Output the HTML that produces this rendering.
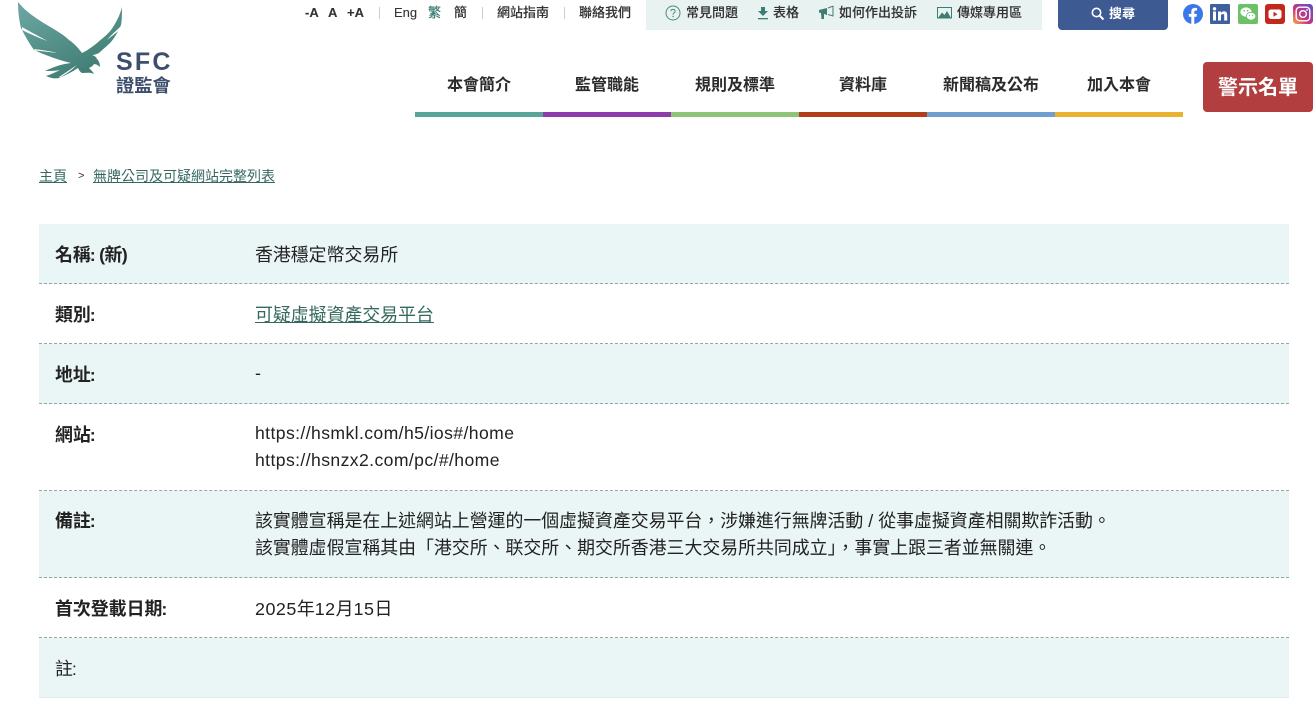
<!DOCTYPE html>
<html lang="zh-Hant"><head><meta charset="utf-8"><title>無牌公司及可疑網站完整列表</title>
<style>
html,body{margin:0;padding:0;background:#fff;width:1315px;height:713px;overflow:hidden}
body{position:relative;font-family:"Liberation Sans","Noto Sans CJK TC",sans-serif;color:#222}
.a{position:absolute;white-space:nowrap}
.t{font-size:13px;line-height:16px;top:5px;color:#333;font-weight:500;-webkit-text-stroke:.1px #333}
.sep{position:absolute;top:7px;width:1px;height:12px;background:#ccc}
.nav{position:absolute;top:74px;width:128px;text-align:center;font-size:16px;line-height:24px;font-weight:700;color:#2b2b2b}
.bar{position:absolute;top:112px;height:5px;width:128px}
.row{position:absolute;left:39px;width:1250px;box-sizing:border-box;border-bottom:1px dashed #8fa8a5}
.row.c{background:#eaf6f6}
.l{position:absolute;left:16px;top:18px;font-size:17.9px;line-height:27px;font-weight:700;color:#222;white-space:nowrap}
.v{position:absolute;left:216px;top:18px;font-size:17.9px;line-height:27px;color:#222;white-space:nowrap}
a{color:#35695f;text-decoration:underline}
.u{font-size:17.6px;letter-spacing:.4px}
.k{margin-left:-1px;font-weight:inherit}
.p{font-family:"Noto Sans CJK SC",sans-serif;line-height:1}
</style></head><body>
<svg class="a" style="left:0;top:0" width="130" height="85" viewBox="0 0 130 85">
<defs><linearGradient id="g" x1="0" y1="0" x2="0.6" y2="1"><stop offset="0" stop-color="#6fa8a3"/><stop offset="1" stop-color="#3f7d74"/></linearGradient></defs>
<path fill="url(#g)" d="M18 2C26 12 37 19 47 25C57 31 64 35 69 40C75 44 79 49 82 53C88 50 92 47 97 43C103 38 108 34 111 30C116 23 120 15 122 7C122 14 122 20 121 25C118 32 115 37 111 42C106 47 102 50 99 53C97 54 94 55 92 55C95 56 96 57 97 59C99 61 100 64 100 67C98 65 96 64 94 64C93 66 91 67 89 68C91 70 93 72 94 74C90 72 86 73 82 73C80 72 79 70 78 68C72 72 66 75 59 78C55 79 50 78 46 76C52 74 56 72 60 70C55 71 50 71 45 71C53 67 62 64 71 63C58 60 45 55 34 50C29 43 25 36 21 28C19 20 18 11 18 2Z"/>
<path fill="#fff" d="M22 27C31 32 40 37 47.5 41C39 38 30 34 22 30Z M34 49C41 50 50 51 57 53C49 52 41 51 35 50.5Z M59 77C65 73 71 69 77 65C72 70 66 74 60 77.5Z M120 27C116 31 111 35 107 40C112 36 116 33 119.5 30Z"/>
</svg>
<div class="a" style="left:116px;top:49px;font-size:25px;line-height:27px;font-weight:700;letter-spacing:2.2px;color:#3d4f6d">SFC</div>
<div class="a" style="left:116px;top:76px;font-size:18.3px;line-height:20px;font-weight:700;color:#3d4f6d">證監會</div>

<span class="a t" style="left:305px;font-weight:700">-A</span><span class="a t" style="left:328px;font-weight:700">A</span><span class="a t" style="left:347px;font-weight:700">+A</span>
<i class="sep" style="left:379px"></i>
<span class="a t" style="left:394px">Eng</span><span class="a t" style="left:428px;color:#3e7d74;-webkit-text-stroke:.1px #3e7d74">繁</span><span class="a t" style="left:454px">簡</span>
<i class="sep" style="left:482px"></i>
<span class="a t" style="left:497px">網站指南</span>
<i class="sep" style="left:564px"></i>
<span class="a t" style="left:579px">聯絡我們</span>

<div class="a" style="left:646px;top:0;width:396px;height:30px;background:#e8f2f0"></div>
<svg class="a" style="left:665px;top:5px" width="16" height="16" viewBox="0 0 16 16"><circle cx="8" cy="8" r="7" fill="none" stroke="#4a8a80" stroke-width="1"/><path d="M5.9 6.2C6 3.8 10.1 3.8 10.1 6.2C10.1 7.8 8 7.8 8 9.6" fill="none" stroke="#4a8a80" stroke-width="1"/><circle cx="8" cy="11.5" r=".7" fill="#4a8a80"/></svg>
<span class="a t" style="left:686px">常見問題</span>
<svg class="a" style="left:757px;top:6px" width="12" height="14" viewBox="0 0 12 14"><path d="M4 1H8V5H11L6 10L1 5H4Z" fill="#3e7d74"/><rect x="1" y="12" width="10" height="1.3" fill="#3e7d74"/></svg>
<span class="a t" style="left:773px">表格</span>
<svg class="a" style="left:818px;top:5px" width="17" height="15" viewBox="0 0 17 15"><path d="M1 5L9 3V10L6 9L6 14H3.5L3 8L1 7.5Z" fill="#3e7d74"/><path d="M10 3L15 1.2V11L10 9.5" fill="none" stroke="#3e7d74" stroke-width="1"/></svg>
<span class="a t" style="left:839px">如何作出投訴</span>
<svg class="a" style="left:937px;top:6px" width="15" height="13" viewBox="0 0 15 13"><rect x=".5" y="1.5" width="14" height="10.5" fill="none" stroke="#3e7d74"/><path d="M1 12L5 6.5L7.5 9L10 5L14 12Z" fill="#3e7d74"/></svg>
<span class="a t" style="left:957px">傳媒專用區</span>

<div class="a" style="left:1058px;top:0;width:110px;height:30px;background:#3e5a92;border-radius:0 0 4px 4px"></div>
<svg class="a" style="left:1091px;top:7px" width="14" height="14" viewBox="0 0 14 14"><circle cx="5.5" cy="5.5" r="4.2" fill="none" stroke="#fff" stroke-width="1.6"/><path d="M8.7 8.7L12.5 12.5" stroke="#fff" stroke-width="2"/></svg>
<span class="a t" style="left:1109px;top:6px;color:#fff;font-weight:700;-webkit-text-stroke:0">搜尋</span>

<svg class="a" style="left:1183px;top:4px" width="20" height="20" viewBox="0 0 20 20"><circle cx="10" cy="10" r="10" fill="#3b78e7"/><path d="M8.3 20V12.8H5.8V9.9H8.3V7.7C8.3 5.2 9.8 3.9 12 3.9C13 3.9 14 4.1 14 4.1V6.5H12.8C11.6 6.5 11.3 7.2 11.3 8V9.9H13.9L13.5 12.8H11.3V20Z" fill="#fff"/></svg>
<svg class="a" style="left:1210px;top:4px" width="20" height="20" viewBox="0 0 20 20"><rect width="20" height="20" rx="1" fill="#3f5f9f"/><rect x="3" y="7.5" width="3" height="9" fill="#fff"/><circle cx="4.5" cy="4.8" r="1.7" fill="#fff"/><path d="M8 7.5H11V9C11.6 8 12.6 7.3 14 7.3C16.4 7.3 17.2 8.8 17.2 11.2V16.5H14.2V11.8C14.2 10.6 13.8 10 12.8 10C11.7 10 11 10.8 11 12V16.5H8Z" fill="#fff"/></svg>
<svg class="a" style="left:1238px;top:4px" width="20" height="20" viewBox="0 0 20 20"><rect width="20" height="20" rx="2" fill="#6cc065"/><ellipse cx="8" cy="8" rx="5.6" ry="4.6" fill="#fff"/><ellipse cx="13" cy="12.2" rx="4.8" ry="3.9" fill="#fff" stroke="#6cc065" stroke-width=".8"/><circle cx="6.2" cy="6.8" r=".8" fill="#6cc065"/><circle cx="9.6" cy="6.8" r=".8" fill="#6cc065"/><circle cx="11.5" cy="11.5" r=".6" fill="#6cc065"/><circle cx="14.5" cy="11.5" r=".6" fill="#6cc065"/></svg>
<svg class="a" style="left:1265px;top:4px" width="20" height="20" viewBox="0 0 20 20"><rect width="20" height="20" rx="3" fill="#c4281c"/><rect x="3.5" y="5.5" width="13" height="9.5" rx="2.5" fill="#fff"/><path d="M8.5 7.7L12.5 10.2L8.5 12.7Z" fill="#c4281c"/></svg>
<svg class="a" style="left:1293px;top:4px" width="20" height="20" viewBox="0 0 20 20"><defs><linearGradient id="ig" x1="0" y1="1" x2="1" y2="0"><stop offset="0" stop-color="#f5b13d"/><stop offset=".4" stop-color="#c9357f"/><stop offset="1" stop-color="#5b50c8"/></linearGradient></defs><rect width="20" height="20" rx="3.5" fill="url(#ig)"/><rect x="3.2" y="3.2" width="13.6" height="13.6" rx="3.4" fill="none" stroke="#fff" stroke-width="1.4"/><circle cx="10" cy="10" r="3.3" fill="none" stroke="#fff" stroke-width="1.4"/><circle cx="14" cy="6" r=".9" fill="#fff"/></svg>

<div class="nav" style="left:415px">本會簡介</div><div class="nav" style="left:543px">監管職能</div><div class="nav" style="left:671px">規則及標準</div><div class="nav" style="left:799px">資料庫</div><div class="nav" style="left:927px">新聞稿及公布</div><div class="nav" style="left:1055px">加入本會</div>
<div class="bar" style="left:415px;background:#5aa59a"></div><div class="bar" style="left:543px;background:#8e3bab"></div><div class="bar" style="left:671px;background:#8fc478"></div><div class="bar" style="left:799px;background:#b03e16"></div><div class="bar" style="left:927px;background:#6f9fd0"></div><div class="bar" style="left:1055px;background:#ebb130"></div>
<div class="a" style="left:1203px;top:62px;width:110px;height:50px;line-height:52px;background:#b33e40;border-radius:4px;color:#fff;font-size:20px;font-weight:700;text-align:center">警示名單</div>

<div class="a" style="left:39px;top:166px;font-size:14px;line-height:20px;color:#35695f"><a>主頁</a></div>
<div class="a" style="left:78px;top:168px;font-size:11px;line-height:16px;color:#333">&gt;</div>
<div class="a" style="left:93px;top:166px;font-size:14px;line-height:20px"><a>無牌公司及可疑網站完整列表</a></div>

<div class="row c" style="top:224px;height:60px"><div class="l">名稱<b class="k">:</b><span style="margin-left:-1px;letter-spacing:-.6px"> (新)</span></div><div class="v">香港穩定幣交易所</div></div>
<div class="row" style="top:284px;height:60px"><div class="l">類別<b class="k">:</b></div><div class="v"><a>可疑虛擬資產交易平台</a></div></div>
<div class="row c" style="top:344px;height:60px"><div class="l">地址<b class="k">:</b></div><div class="v" style="top:16px">-</div></div>
<div class="row" style="top:404px;height:87px"><div class="l">網站<b class="k">:</b></div><div class="v" style="top:16px"><span class="u">https://hsmkl.com/h5/ios#/home<br>https://hsnzx2.com/pc/#/home</span></div></div>
<div class="row c" style="top:491px;height:87px"><div class="l" style="top:17px">備註<b class="k">:</b></div><div class="v" style="top:17px">該實體宣稱是在上述網站上營運的一個虛擬資產交易平台<span class="p">，</span>涉嫌進行無牌活動 / 從事虛擬資產相關欺詐活動<span class="p">。</span><br>該實體虛假宣稱其由「港交所<span class="p">、</span>联交所<span class="p">、</span>期交所香港三大交易所共同成立」<span class="p">，</span>事實上跟三者並無關連<span class="p">。</span></div></div>
<div class="row" style="top:578px;height:60px"><div class="l">首次登載日期<b class="k">:</b></div><div class="v"><span style="letter-spacing:.5px">2025</span>年<span style="letter-spacing:.5px">12</span>月<span style="letter-spacing:.5px">15</span>日</div></div>
<div class="row c" style="top:638px;height:60px;border-bottom:1px solid #e2eaea"><div class="l" style="font-weight:400">註<b class="k" style="font-weight:400">:</b></div></div>
</body></html>
